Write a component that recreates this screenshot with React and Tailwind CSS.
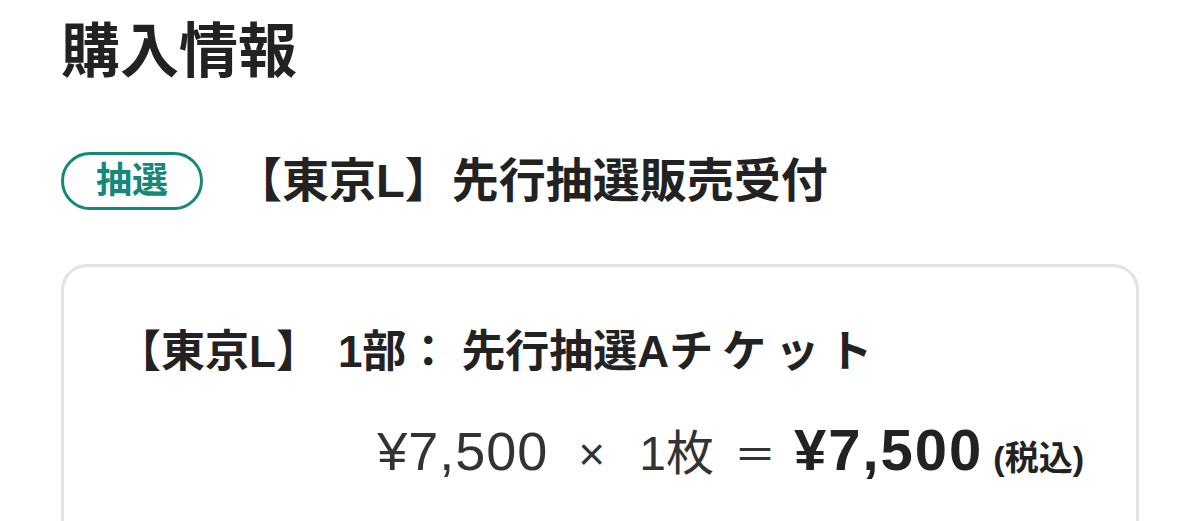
import React from "react";

const sans = { fontFamily: '"Liberation Sans", "Noto Sans CJK JP", sans-serif' };
const cjk = { fontFamily: '"Noto Sans CJK JP", sans-serif' };

const Badge = ({ label }) => (
  <span className="flex items-center justify-center w-[142px] h-[58px] rounded-full border-[3px] border-[#14897a] text-[#14897a] text-[36px] font-bold leading-none">
    {label}
  </span>
);

const PriceLine = ({ unit, qty, total }) => (
  <div className="flex items-baseline justify-end pr-[52px] text-[#333] leading-[60px]">
    <span className="text-[54px] tracking-[1px]">{unit}</span>
    <span className="text-[46px] ml-[30px]">×</span>
    <span className="text-[48px] ml-[34px]">{qty}枚</span>
    <span className="text-[42px] ml-[20px]" style={cjk}>＝</span>
    <span className="text-[58px] font-bold text-[#222] tracking-[2px] ml-[18px]">{total}</span>
    <span className="text-[34px] font-bold text-[#222] ml-[10px]">(税込)</span>
  </div>
);

export default function App() {
  return (
    <div
      className="w-[1199px] h-[521px] overflow-hidden bg-white pl-[61px] pr-[60px] pt-[19px]"
      style={sans}
    >
      <h1 className="text-[59px] leading-[66px] font-bold text-[#222]">購入情報</h1>

      <div className="mt-[67px] flex items-center gap-[32px]">
        <Badge label="抽選" />
        <h2 className="text-[47px] leading-[58px] font-bold text-[#222]">【東京L】先行抽選販売受付</h2>
      </div>

      {/* ticket card */}
      <div className="mt-[54px] border-[3px] border-[#e2e2e2] rounded-[26px] pt-[59px] pl-[53px] h-[400px]">
        <h3 className="text-[44px] leading-[52px] font-bold text-[#222]">
          <span>【東京L】</span>
          <span className="ml-[18px]">1部：</span>
          <span className="ml-[11px]">先行抽選A</span>
          <span className="tracking-[9px]">チケッ</span>
          <span>ト</span>
        </h3>
        <div className="mt-[42px]">
          <PriceLine unit="¥7,500" qty="1" total="¥7,500" />
        </div>
      </div>
    </div>
  );
}
